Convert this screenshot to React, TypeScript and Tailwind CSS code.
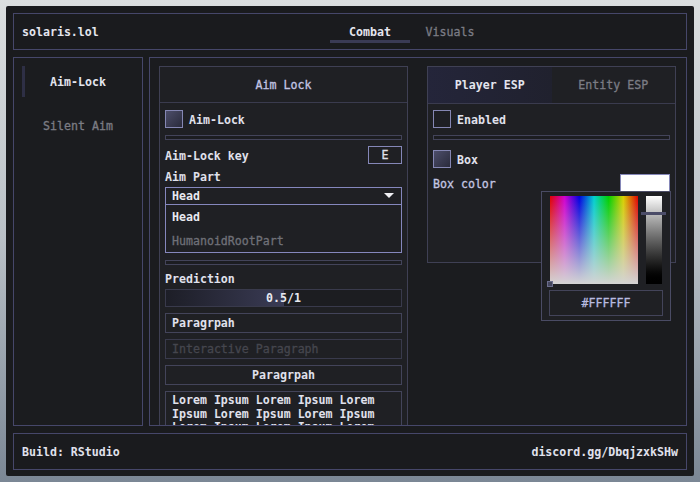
import React from "react";

const F = "font-['DejaVu_Sans_Mono',monospace] text-[11.6px] leading-[14px]";
const MED = "[-webkit-text-stroke:0.3px_currentColor]";

function Check({ on }: { on: boolean }) {
  return (
    <div
      className={
        "w-[18px] h-[18px] border border-[#8587b4] " +
        (on ? "bg-gradient-to-br from-[#4d4e6a] to-[#2a2b3c]" : "bg-[#1e1f24]")
      }
    />
  );
}

function Sep({ mt }: { mt: string }) {
  return <div className={"h-[5px] border border-[#43445a] bg-[#1c1d21] " + mt} />;
}

export default function App() {
  return (
    <div className={"w-[700px] h-[482px] p-[6px] bg-gradient-to-b from-[#dcdfe0] via-[#b9c0c6] to-[#7b8795] " + F}>
      <div className="w-[688px] h-[470px] bg-[#1a1b1e] pt-[7px] px-[7px] pb-[6px] flex flex-col gap-[7px] rounded-[2px]">
        {/* top bar */}
        <div className="h-[37px] border border-[#46476a] flex items-center">
          <div className="w-[316px] pl-[8px] font-bold text-[#e4e5ee]">solaris.lol</div>
          <div className="flex">
            <div className="w-[80px] flex flex-col items-center pt-[4px]">
              <span className="font-bold text-[#e4e5ee]">Combat</span>
              <div className="mt-[1px] h-[3px] w-full bg-[#3a3b55]" />
            </div>
            <div className="w-[80px] flex flex-col items-center pt-[4px]">
              <span className={"text-[#7b7c84] " + MED}>Visuals</span>
              <div className="mt-[1px] h-[3px] w-full" />
            </div>
          </div>
        </div>

        {/* middle */}
        <div className="h-[369px] flex gap-[6px]">
          {/* sidebar */}
          <div className="w-[130px] border border-[#46476a] bg-[#1b1c1f] pt-[8px] flex flex-col">
            <div className="h-[31px] flex items-stretch">
              <div className="ml-[8px] w-[3px] bg-[#2e2f45]" />
              <div className="flex-1 flex items-center justify-center font-bold text-[#e4e5ee]">Aim-Lock</div>
              <div className="w-[11px]" />
            </div>
            <div className={"mt-[13px] h-[31px] flex items-center justify-center text-[#7b7c84] " + MED}>Silent Aim</div>
          </div>

          {/* content */}
          <div className="flex-1 border border-[#46476a] bg-[#1b1c1f] pt-[8px] pl-[9px] flex gap-[19px] overflow-hidden">
            {/* Aim Lock panel */}
            <div className="w-[249px] h-[420px] shrink-0 border border-[#3f4054] bg-[#1f2024] flex flex-col">
              <div className={"h-[36px] border-b border-[#3a3b4e] flex items-center justify-center text-[#c3c5e4] pt-[1px] " + MED}>Aim Lock</div>
              <div className="px-[5px] flex flex-col">
                <div className="mt-[7px] h-[18px] flex items-center gap-[6px]">
                  <Check on />
                  <span className="font-bold text-[#e0e1ec] pt-[1px]">Aim-Lock</span>
                </div>
                <Sep mt="mt-[7px]" />
                <div className="mt-[6px] h-[18px] flex items-center justify-between">
                  <span className="font-bold text-[#e0e1ec] pt-[1px]">Aim-Lock key</span>
                  <div className={"w-[34px] h-[18px] border border-[#8587b8] flex items-center justify-center text-[#e0e1ec] " + MED}>E</div>
                </div>
                <div className="mt-[6px] h-[14px] font-bold text-[#e0e1ec]">Aim Part</div>
                <div className="mt-[3px] border border-[#8587bd] flex flex-col">
                  <div className="h-[17px] border-b border-[#8587bd] flex items-center justify-between pl-[6px] pr-[7px]">
                    <span className="font-bold text-[#e8e9f0]">Head</span>
                    <svg width="10" height="6" viewBox="0 0 10 6">
                      <polygon points="0,0 10,0 5,5" fill="#f0f0f4" />
                    </svg>
                  </div>
                  <div className="h-[24px] flex items-center pl-[6px] font-bold text-[#e8e9f0]">Head</div>
                  <div className={"h-[23px] flex items-center pl-[6px] text-[#6f7078] " + MED}>HumanoidRootPart</div>
                </div>
                <Sep mt="mt-[7px]" />
                <div className="mt-[7px] h-[14px] font-bold text-[#e0e1ec]">Prediction</div>
                <div className="mt-[3px] h-[18px] border border-[#393a4c] bg-[#1c1d21] relative flex items-center justify-center">
                  <div className="absolute left-0 top-0 bottom-0 w-[50%] bg-gradient-to-r from-[#1d1e27] to-[#3a3b55]" />
                  <span className="relative font-bold text-[#e8e9f0]">0.5/1</span>
                </div>
                <div className="mt-[6px] h-[20px] border border-[#43445a] flex items-center pl-[6px] font-bold text-[#e0e1ec]">Paragrpah</div>
                <div className={"mt-[6px] h-[20px] border border-[#393a4c] flex items-center pl-[6px] text-[#45464e] " + MED}>Interactive Paragraph</div>
                <div className="mt-[6px] h-[20px] border border-[#43445a] flex items-center justify-center font-bold text-[#e0e1ec]">Paragrpah</div>
                <div className="mt-[6px] h-[60px] border border-[#43445a] pl-[6px] pt-[2px] font-bold text-[#e0e1ec] leading-[13.5px]">
                  Lorem Ipsum Lorem Ipsum Lorem
                  <br />
                  Ipsum Lorem Ipsum Lorem Ipsum
                  <br />
                  Lorem Ipsum Lorem Ipsum Lorem
                </div>
              </div>
            </div>

            {/* ESP panel */}
            <div className="w-[249px] h-[197px] shrink-0 border border-[#3f4054] bg-[#1f2024] relative flex flex-col">
              <div className="h-[37px] border-b border-[#3a3b4e] flex">
                <div className="flex-1 flex items-center justify-center font-bold text-[#e4e5ee] bg-gradient-to-r from-[#24253a] to-[#20212e]">Player ESP</div>
                <div className={"flex-1 flex items-center justify-center text-[#7b7c84] " + MED}>Entity ESP</div>
              </div>
              <div className="px-[5px] flex flex-col">
                <div className="mt-[6px] h-[18px] flex items-center gap-[6px]">
                  <Check on={false} />
                  <span className="font-bold text-[#e0e1ec] pt-[1px]">Enabled</span>
                </div>
                <Sep mt="mt-[7px]" />
                <div className="mt-[10px] h-[18px] flex items-center gap-[6px]">
                  <Check on />
                  <span className="font-bold text-[#e0e1ec] pt-[1px]">Box</span>
                </div>
                <div className="mt-[6px] h-[18px] flex items-center justify-between">
                  <span className={"text-[#c3c6e2] pt-[1px] " + MED}>Box color</span>
                  <div className="w-[50px] h-[18px] border border-[#8587b8] bg-white" />
                </div>
              </div>

              {/* color picker popup */}
              <div className="absolute left-[113px] top-[124px] w-[130px] h-[130px] border border-[#4a4b64] bg-[#1f2024] z-10 flex flex-col">
                <div className="mt-[4px] ml-[8px] flex gap-[8px]">
                  <div
                    className="relative w-[88px] h-[88px]"
                    style={{
                      background:
                        "linear-gradient(to bottom, rgba(212,212,212,0) 0%, rgba(212,212,212,1) 100%), linear-gradient(to right, #e00000, #d000d0, #0000e0, #00d0d0, #00d000, #d8d000, #e00000)",
                    }}
                  >
                    <div className="absolute left-[-3px] bottom-[-3px] w-[6px] h-[6px] border border-[#6b6d8c] bg-[#44465e]" />
                  </div>
                  <div className="relative w-[16px] h-[88px] bg-gradient-to-b from-white to-black">
                    <div className="absolute left-[-5px] top-[16px] w-[25px] h-[3px] bg-[#4b4c68]" />
                  </div>
                </div>
                <div className={"mt-[6px] mx-[7px] h-[26px] border border-[#43445a] flex items-center justify-center text-[#b9bce0] " + MED}>#FFFFFF</div>
              </div>
            </div>
          </div>
        </div>

        {/* bottom bar */}
        <div className="h-[37px] border border-[#46476a] flex items-center justify-between px-[8px] font-bold text-[#e0e1ec]">
          <span>Build: RStudio</span>
          <span>discord.gg/DbqjzxkSHw</span>
        </div>
      </div>
    </div>
  );
}
